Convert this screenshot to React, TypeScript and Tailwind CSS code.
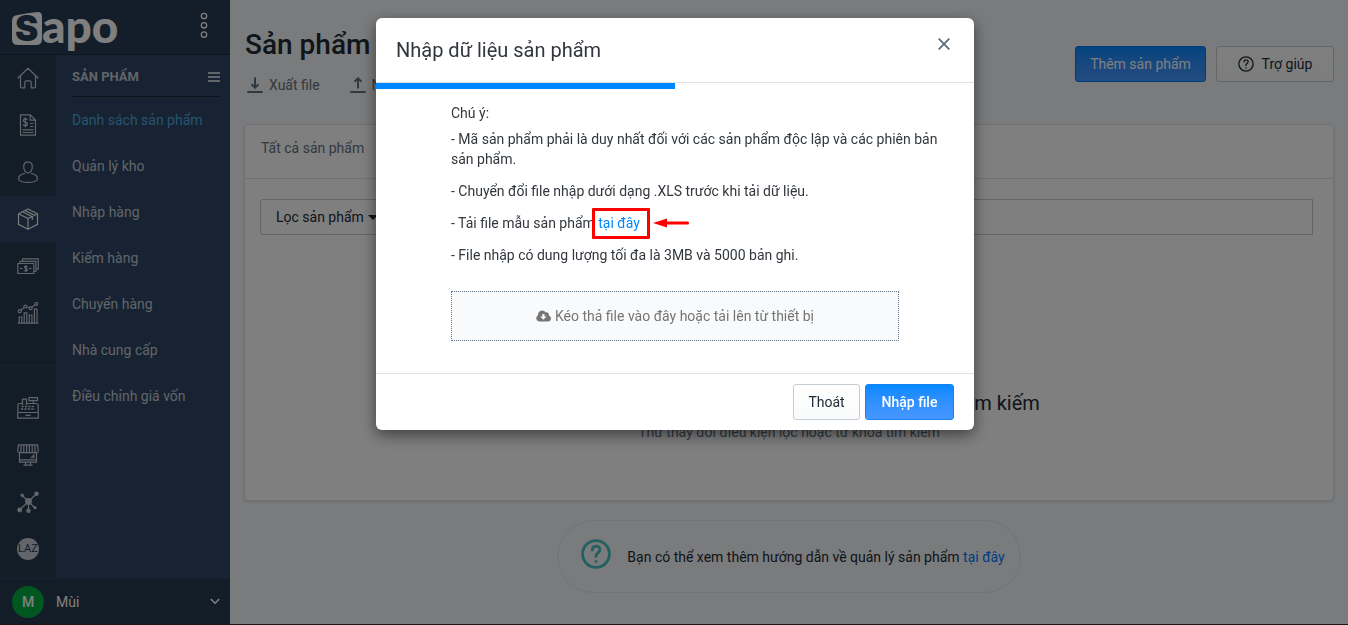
import type { ReactNode } from "react";

const menuItems = [
  "Danh sách sản phẩm",
  "Quản lý kho",
  "Nhập hàng",
  "Kiểm hàng",
  "Chuyển hàng",
  "Nhà cung cấp",
  "Điều chỉnh giá vốn",
];

function RailSvg({ children }: { children: ReactNode }) {
  return (
    <svg width="22" height="22" viewBox="0 0 22 22" fill="none" stroke="currentColor" strokeWidth="1.2" aria-hidden="true">
      {children}
    </svg>
  );
}

const mainRail = [
  {
    label: "Tổng quan",
    icon: (
      <RailSvg>
        <path d="M1 11 11 1.2 21 11M3.5 9.2v10.6q0 1 1 1h3.3v-5.3q0-1.7 1.6-1.7h3.2q1.6 0 1.6 1.7v5.3h3.3q1 0 1-1V9.2" strokeLinejoin="round" strokeLinecap="round" />
      </RailSvg>
    ),
  },
  {
    label: "Đơn hàng",
    icon: (
      <RailSvg>
        <path d="M3.5.8h9.8l5.2 5.3v15.1h-15zM13.2.8v5.4h5.2" />
        <path d="M13 9.5h3.5M13 12.5h3.5M5.5 15.8h11M5.5 18.5h11" />
        <path d="M10.3 5.8q-.5-1-2-1-1.9 0-1.9 1.7 0 1.3 2 1.7 2.1.4 2.1 1.9 0 1.7-2.2 1.7-1.6 0-2.2-1.2M8.3 3.3v9.9" />
      </RailSvg>
    ),
  },
  {
    label: "Khách hàng",
    icon: (
      <RailSvg>
        <path d="M11 .8c-2.7 0-4.3 1.900-4.300 4.900 0 3.400 1.900 6.300 4.300 6.300s4.300-2.900 4.300-6.300c0-3-1.600-4.900-4.300-4.900ZM7.800 12.200 3.600 14c-1.500.7-2 1.800-2 3.600 0 1.400.5 2 2 2.600 4.200 1.400 10.600 1.400 14.800 0 1.500-.6 2-1.200 2-2.600 0-1.800-.5-2.900-2-3.600l-4.200-1.800" />
      </RailSvg>
    ),
  },
  {
    label: "Sản phẩm",
    active: true,
    icon: (
      <RailSvg>
        <path d="M11 1 20.5 5.8v10.600L11 21.200 1.500 16.400V5.800zM1.500 5.800 11 10.500l9.500-4.700M11 10.500v10.700M5.500 3.800l9.800 4.900v3.300M8 2.500l9.600 4.900" strokeLinejoin="round" />
      </RailSvg>
    ),
  },
  {
    label: "Sổ quỹ",
    icon: (
      <RailSvg>
        <path d="M.8 8.500h16v10H.8zM3 8V6.300h15.900v10.200H17M5.500 6V3.800h15.700v10.400H19" />
        <path d="M3 13.500h2.500M12 13.500h2.500M10.300 11.900q-.4-.8-1.500-.8-1.300 0-1.300 1.100c0 1.500 2.900.9 2.900 2.500 0 1-.7 1.300-1.500 1.300-1 0-1.500-.5-1.600-1M8.900 10.200v6.800" />
      </RailSvg>
    ),
  },
  {
    label: "Báo cáo",
    icon: (
      <RailSvg>
        <path d="M.5 21.200h21M2.200 21v-6h2.600v6M7.200 21V10.800h2.600V21M12.300 21v-8h2.600v8M17.400 21V7.200H20V21" />
        <circle cx="2.700" cy="9.200" r="1.500" />
        <circle cx="8.400" cy="4.500" r="1.500" />
        <circle cx="13.600" cy="6.200" r="1.500" />
        <circle cx="19.300" cy="1.900" r="1.400" />
        <path d="m3.800 8.200 3.500-2.800M9.900 5l2.300.8M14.800 5.200l3.400-2.500" />
      </RailSvg>
    ),
  },
];

const channelRail = [
  {
    label: "Bán tại quầy",
    icon: (
      <RailSvg>
        <path d="M.7 15.500h20.600v5.700H.7zM.9 15.300V8.500q0-2 2-2H5M9.500 6.500h9.700q2 0 2 2v6.800M5.500 8V2.200h4V8M12 .7h8.500v3H12zM16.200 3.700v2.800M8.500 18.400h5" />
        <path d="M4.500 9.500h13M4 12h14" strokeDasharray="2.200 1.200" strokeWidth="1.500" />
      </RailSvg>
    ),
  },
  {
    label: "Website",
    icon: (
      <RailSvg>
        <path d="M1.500.8h19l.8 6.200q-.3 1.600-1.600 1.600H2.300Q1 8.600.7 7zM4 1v7.500M6.800 1v7.500M9.600 1v7.500M12.400 1v7.500M15.200 1v7.500M18 1v7.500" />
        <path d="M2.500 8.600v9.600h17V8.600M2.500 15.800h17M8.500 18.200v2.600M13.500 18.200v2.600M6.500 21.200h9M14 14l3.500-3.500M16 14l1.500-1.500" />
      </RailSvg>
    ),
  },
  {
    label: "Kênh bán hàng",
    icon: (
      <RailSvg>
        <path d="M11.500 10.500 19.500 2.800M11.500 10.500 5 4.500M11.500 10.500 2.500 19M11.500 10.500V20M11.500 10.500l6.500 6.500" />
        <g fill="currentColor" stroke="none">
          <circle cx="11.500" cy="10.500" r="3.400" />
          <circle cx="19.500" cy="2.800" r="2.300" />
          <circle cx="5.200" cy="4.200" r="1.700" />
          <circle cx="2.700" cy="19" r="2.400" />
          <circle cx="11.500" cy="19.700" r="2.200" />
          <circle cx="18" cy="16.700" r="1.600" />
        </g>
      </RailSvg>
    ),
  },
  {
    label: "Lazada",
    icon: (
      <span className="flex size-[22px] items-center justify-center rounded-full bg-[#c4cad3] text-[11px] text-[#263a50]">
        LAZ
      </span>
    ),
  },
];

function RailLink({ item }: { item: { label: string; active?: boolean; icon: ReactNode } }) {
  return (
    <a
      href="#"
      aria-label={item.label}
      className={`flex h-[47px] items-center pb-px pl-[17px] ${item.active ? "bg-[#2e4664] text-[#f0f2f5]" : ""}`}
    >
      {item.icon}
    </a>
  );
}

function Logo() {
  return (
    <svg width="112" height="54" viewBox="0 0 112 54" className="overflow-visible" role="img" aria-label="Sapo">
      <path d="M6 15 Q15 13 26 12 Q30 12 30 17 V39 Q30 45 24 45 H6 Q0 45 0 39 V21 Q0 15 6 15Z" fill="#fff" />
      <text x="3" y="41" fontFamily="Inter, sans-serif" fontWeight="900" fontSize="35" fill="#283c54">
        S
      </text>
      <text x="30" y="43" fontFamily="Lato, sans-serif" fontWeight="900" fontSize="46" fill="#fff">
        apo
      </text>
    </svg>
  );
}

function Sidebar() {
  return (
    <aside className="flex w-[230px] shrink-0 flex-col bg-[#2e4664] text-[#c4cad3]">
      <div className="flex h-[55px] items-start justify-between border-b border-[#1c2a3c] bg-[#283c54] pr-5 pl-3">
        <Logo />
        <button type="button" aria-label="Thêm" className="mt-[10px] text-white">
          <svg width="12" height="30" viewBox="0 0 12 30" fill="none" stroke="currentColor" strokeWidth="1.3">
            <circle cx="6" cy="6" r="2.700" />
            <circle cx="6" cy="15.300" r="2.700" />
            <circle cx="6" cy="24.600" r="2.700" />
          </svg>
        </button>
      </div>

      <div className="flex flex-1">
        <nav aria-label="Chính" className="w-14 bg-[#263a50]">
          {mainRail.map((item) => (
            <RailLink key={item.label} item={item} />
          ))}
          <div className="mt-7 border-t border-[#31465f] pt-[19px]">
            {channelRail.map((item) => (
              <RailLink key={item.label} item={item} />
            ))}
          </div>
        </nav>

        <nav aria-label="Sản phẩm" className="flex-1 pr-[10px] pl-4">
          <div className="flex h-[42px] items-center justify-between border-b border-[#1a2636] pt-0.5">
            <h2 className="text-[13px] font-bold">SẢN PHẨM</h2>
            <button type="button" aria-label="Thu gọn">
              <svg width="12" height="10" viewBox="0 0 12 10" fill="currentColor">
                <path d="M0 0h12v2H0zM0 4h12v2H0zM0 8h12v2H0z" />
              </svg>
            </button>
          </div>
          <ul>
            {menuItems.map((label, index) => (
              <li key={label}>
                <a href="#" className={`flex h-[46px] items-center ${index === 0 ? "text-[#4fa8dc]" : ""}`}>
                  {label}
                </a>
              </li>
            ))}
          </ul>
        </nav>
      </div>

      <button type="button" className="flex h-[46px] items-center border-t border-[#2e4664] bg-[#263a50] pr-[10px] pl-3 text-white">
        <span className="flex size-8 items-center justify-center rounded-full bg-[#00b141] font-medium">M</span>
        <span className="ml-3 flex-1 text-left">Mùi</span>
        <svg width="10" height="7" viewBox="0 0 10 7" fill="none" stroke="currentColor" strokeWidth="1.600">
          <path d="m.8 1 4.200 4.200L9.200 1" />
        </svg>
      </button>
    </aside>
  );
}

function QuestionIcon({ className, strokeWidth }: { className: string; strokeWidth: number }) {
  return (
    <svg viewBox="0 0 30 30" fill="none" stroke="currentColor" strokeWidth={strokeWidth} strokeLinecap="round" className={className} aria-hidden="true">
      <circle cx="15" cy="15" r="13.400" />
      <path d="M11.300 11c0-5 7.600-5 7.600-.4 0 3.200-3.900 3-3.900 7" />
      <path d="M15 22.400v.1" />
    </svg>
  );
}

function ProductPage() {
  return (
    <main className="min-w-0 flex-1 px-[14px] pt-[26px]">
      <header className="flex items-start justify-between">
        <div className="pl-px">
          <h1 className="text-[28px] leading-[38px] font-medium text-[#212b36]">Sản phẩm</h1>
          <div className="mt-[11px] flex gap-[30px] pl-0.5 text-[#637381]">
            <button type="button" className="flex items-center gap-[6px]">
              <svg width="16" height="16" viewBox="0 0 16 16" fill="none" stroke="currentColor" strokeWidth="2">
                <path d="M8 .5v10M4.500 7.300 8 10.800l3.500-3.500M.3 15h15.400" />
              </svg>
              Xuất file
            </button>
            <button type="button" className="flex items-center gap-[6px]">
              <svg width="16" height="16" viewBox="0 0 16 16" fill="none" stroke="currentColor" strokeWidth="2">
                <path d="M8 11.500v-10M4.500 4.800 8 1.300l3.500 3.500M.3 15h15.400" />
              </svg>
              Nhập file
            </button>
          </div>
        </div>
        <div className="mt-5 flex gap-[10px]">
          <button type="button" className="h-9 w-[131px] rounded-[3px] border border-[#0078f0] bg-linear-to-b from-[#0088ff] to-[#4797ff] text-white">
            Thêm sản phẩm
          </button>
          <button type="button" className="flex h-9 w-[118px] items-center justify-center gap-2 rounded-[3px] border border-[#c4cdd5] bg-linear-to-b from-white to-[#f9fafb] text-[#212b36]">
            <QuestionIcon className="size-4" strokeWidth={2.5} />
            Trợ giúp
          </button>
        </div>
      </header>

      <section className="mt-[29px] h-[377px] rounded-[4px] border border-[#dfe3e8] bg-white shadow-sm">
        <div className="flex h-[54px] items-center border-b border-[#dfe3e8] px-4 pb-2 text-[#637381]">
          <a href="#">Tất cả sản phẩm</a>
        </div>
        <div className="flex pt-5 pr-5 pl-[15px]">
          <button type="button" className="flex h-9 w-[136px] items-center gap-1 rounded-l-[3px] border border-[#c4cdd5] px-[15px] whitespace-nowrap text-[#212b36]">
            Lọc sản phẩm
            <svg width="10" height="5" viewBox="0 0 10 5" fill="currentColor">
              <path d="M0 0h10L5 5z" />
            </svg>
          </button>
          <input type="search" aria-label="Tìm kiếm sản phẩm" className="h-9 min-w-0 flex-1 border border-l-0 border-[#c4cdd5] px-3" />
        </div>
        <div className="mt-[154px] text-center">
          <h2 className="text-[20px] leading-7 text-[#212b36]">Không tìm thấy sản phẩm phù hợp với điều kiện tìm kiếm</h2>
          <p className="mt-[5px] text-[#637381]">Thử thay đổi điều kiện lọc hoặc từ khóa tìm kiếm</p>
        </div>
      </section>

      <footer className="mt-[19px] flex justify-center">
        <div className="flex h-[73px] items-center rounded-full border border-[#e1e5ea] pr-[15px] pl-[23px] text-[#212b36]">
          <QuestionIcon className="mr-4 mb-[6px] size-[30px] text-[#47c1bf]" strokeWidth={2.8} />
          <p>
            Bạn có thể xem thêm hướng dẫn về quản lý sản phẩm{" "}
            <a href="#" className="text-[#0078ff]">
              tại đây
            </a>
          </p>
        </div>
      </footer>
    </main>
  );
}

function ImportDialog() {
  return (
    <div className="fixed inset-0 flex items-start justify-center bg-black/50 pt-[18px] pl-0.5">
      <div role="dialog" aria-modal="true" aria-labelledby="import-title" className="w-full max-w-[598px] overflow-hidden rounded-[6px] bg-white text-[#212b36] shadow-[0_5px_15px_rgba(0,0,0,0.5)]">
        <div className="flex h-[65px] items-center justify-between border-b border-[#dfe3e8] pr-6 pl-5">
          <h2 id="import-title" className="text-[20px] text-[#31373d]">
            Nhập dữ liệu sản phẩm
          </h2>
          <button type="button" aria-label="Đóng" className="mb-3 text-[#5c6b7a]">
            <svg width="12" height="12" viewBox="0 0 12 12" fill="none" stroke="currentColor" strokeWidth="1.800">
              <path d="m.7.700 10.600 10.600M11.300.700.700 11.300" />
            </svg>
          </button>
        </div>
        <div className="h-[6px] w-1/2 bg-[#0088ff]" />

        <div className="px-[75px] pt-[14px] pb-8 text-[#31373d]">
          <p>Chú ý:</p>
          <ul className="-mr-11 mt-[6px] space-y-3">
            <li>- Mã sản phẩm phải là duy nhất đối với các sản phẩm độc lập và các phiên bản sản phẩm.</li>
            <li>- Chuyển đổi file nhập dưới dạng .XLS trước khi tải dữ liệu.</li>
            <li>
              - Tải file mẫu sản phẩm{" "}
              <span className="relative">
                <a href="#" className="text-[#0088ff]">
                  tại đây
                </a>
                <span className="absolute -top-[7px] -right-[10px] -left-[6px] h-[31px] rounded-[1px] border-3 border-[#ff0000]" />
                <svg width="36" height="10" viewBox="0 0 36 10" className="absolute top-[3px] left-full ml-[13px] max-w-none" fill="#ff0000" aria-hidden="true">
                  <path d="M0 5 14 .500v3H35q1 0 1 1.500t-1 1.500H14v3z" />
                </svg>
              </span>
            </li>
            <li>- File nhập có dung lượng tối đa là 3MB và 5000 bản ghi.</li>
          </ul>
          <label className="mt-[26px] flex h-[50px] items-center justify-center gap-1 border border-dotted border-[#637381] bg-[#f9fafb] text-[#757575]">
            <svg width="15" height="12" viewBox="0 0 15 12" fill="currentColor" aria-hidden="true">
              <path fillRule="evenodd" d="M3.400 11.500A3.300 3.300 0 0 1 2 5.300 4.200 4.200 0 0 1 9.700 2.500a2.400 2.400 0 0 1 3 3.100 3 3 0 0 1-.9 5.900zM6.300 4v2.500H4.200l3.200 3.200 3.200-3.200H8.500V4z" />
            </svg>
            Kéo thả file vào đây hoặc tải lên từ thiết bị
            <input type="file" accept=".xls" className="sr-only" />
          </label>
        </div>

        <div className="flex h-[57px] items-center justify-end gap-[5px] border-t border-[#dfe3e8] pr-5">
          <button type="button" className="h-9 w-[67px] rounded-[3px] border border-[#c4cdd5] bg-linear-to-b from-white to-[#f9fafb]">
            Thoát
          </button>
          <button type="button" className="h-9 w-[89px] rounded-[3px] border border-[#1a80ee] bg-linear-to-b from-[#0088ff] to-[#4797ff] font-medium text-white">
            Nhập file
          </button>
        </div>
      </div>
    </div>
  );
}

export default function App() {
  return (
    <div className="flex min-h-screen border-b border-[#303030] bg-[#f4f6f8] font-['Roboto','Noto_Sans',sans-serif] text-[14px] leading-5">
      <Sidebar />
      <ProductPage />
      <ImportDialog />
    </div>
  );
}
